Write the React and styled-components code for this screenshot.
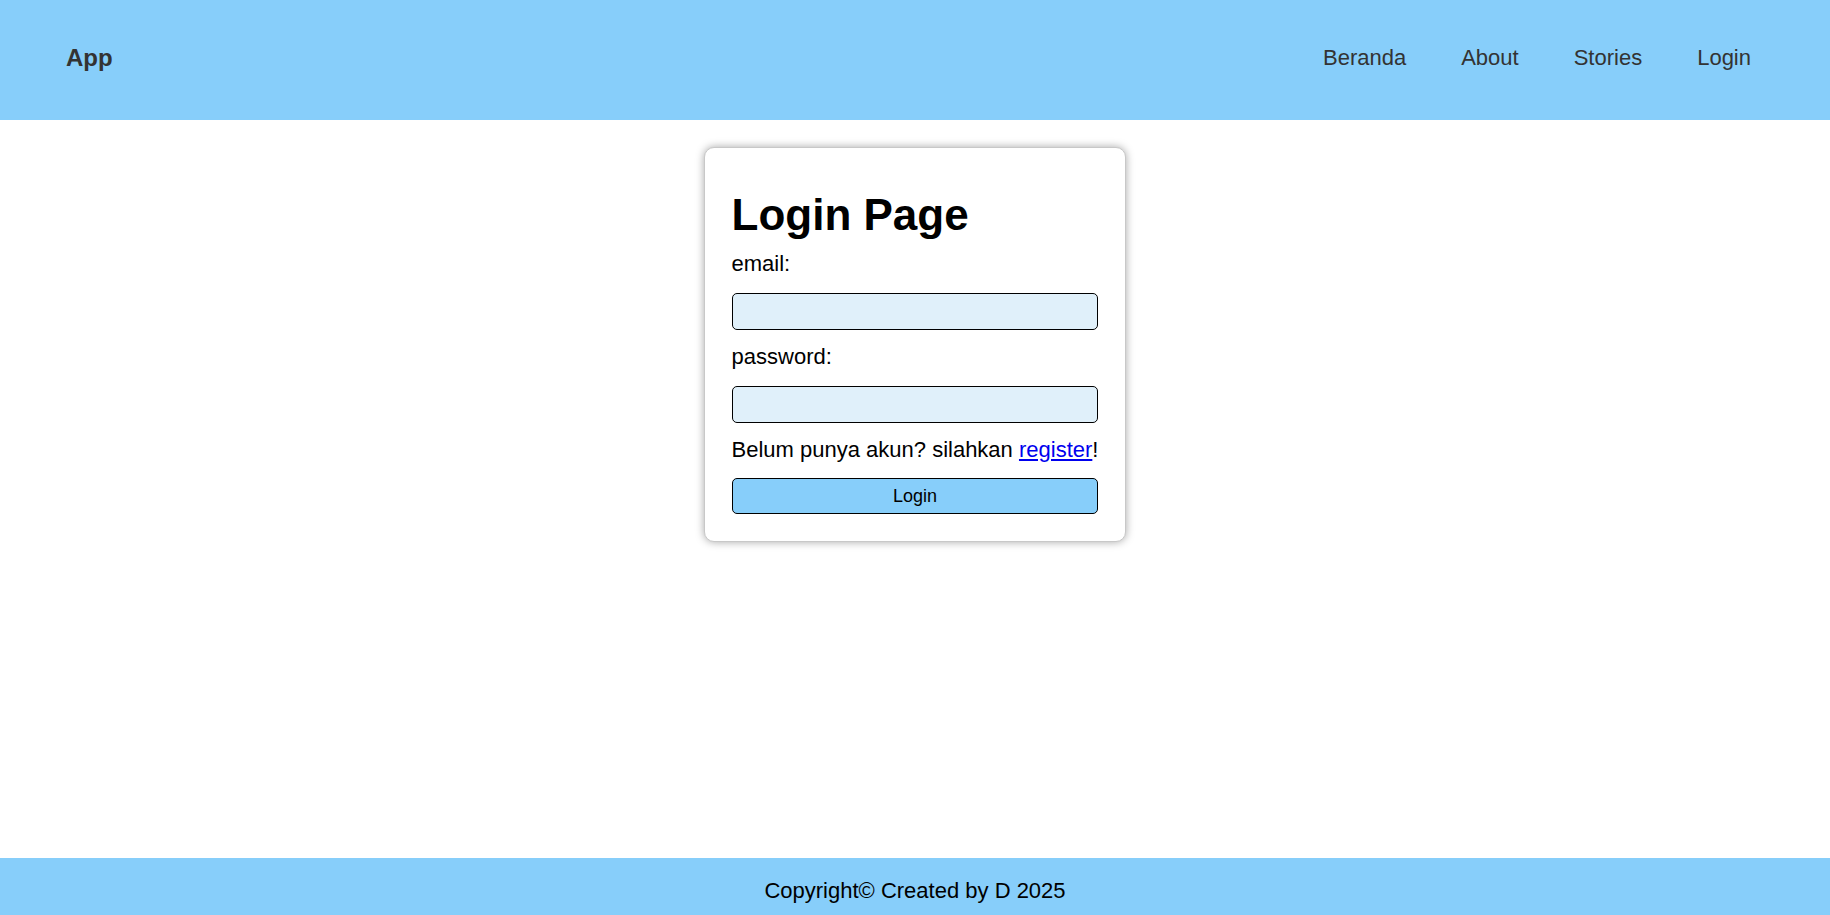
import React, { useState } from 'react'
import styled, { createGlobalStyle } from 'styled-components'

const GlobalStyle = createGlobalStyle`
  html, body {
    margin: 0;
    padding: 0;
    font-family: "Liberation Sans", Arial, sans-serif;
    background-color: #ffffff;
  }
  * {
    box-sizing: border-box;
  }
`

const Page = styled.div`
  min-height: 100vh;
  display: flex;
  flex-direction: column;
`

const Header = styled.header`
  height: 120px;
  background-color: #87cefa;
  display: flex;
  align-items: center;
  justify-content: space-between;
  padding: 0 79px 4px 66px;
`

const Brand = styled.div`
  font-size: 24px;
  font-weight: 700;
  color: #333333;
`

const Nav = styled.nav`
  display: flex;
  gap: 55px;
`

const NavLink = styled.a`
  font-size: 22px;
  color: #333333;
  text-decoration: none;
  cursor: pointer;
`

const Main = styled.main`
  flex: 1;
  display: flex;
  justify-content: center;
  align-items: flex-start;
  padding-top: 27px;
`

const Card = styled.div`
  width: fit-content;
  padding: 27px;
  border: 1px solid #c8c8c8;
  border-radius: 10px;
  box-shadow: 0 0 8px rgba(0, 0, 0, 0.35);
  background-color: #ffffff;
  font-size: 22px;
  color: #000000;
`

const Title = styled.h1`
  font-size: 44px;
  font-weight: 700;
  margin: 15px 0 0;
`

const LoginForm = styled.form`
  display: flex;
  flex-direction: column;
  gap: 14px;
  margin-top: 11px;
`

const Label = styled.label`
  display: block;
`

const Input = styled.input`
  width: 100%;
  height: 37px;
  border: 1px solid #000000;
  border-radius: 5px;
  background-color: #e0f0fa;
  font-size: 18px;
  padding: 0 8px;
  margin-top: 2px;
  :focus {
    outline: none;
  }
`

const Hint = styled.p`
  margin: 0;
  white-space: nowrap;
  a {
    color: #0000ee;
    text-decoration: underline;
  }
`

const Button = styled.button`
  width: 100%;
  height: 36px;
  border: 1px solid #000000;
  border-radius: 5px;
  background-color: #87cefa;
  font-family: "Liberation Sans", Arial, sans-serif;
  font-size: 18px;
  color: #000000;
  margin-top: 1px;
  cursor: pointer;
`

const Footer = styled.footer`
  height: 57px;
  overflow: hidden;
  background-color: #87cefa;
  text-align: center;
  font-size: 22px;
  color: #000000;
  padding-top: 20px;
`

function App(){
    const [form, setForm] = useState({email: '', password: ''});

    const onChangeForm = (event) => {
        const {name, value} = event.target;
        setForm({...form, [name]: value});
    }

    return(
        <Page>
            <GlobalStyle />
            <Header>
                <Brand>App</Brand>
                <Nav>
                    <NavLink>Beranda</NavLink>
                    <NavLink>About</NavLink>
                    <NavLink>Stories</NavLink>
                    <NavLink>Login</NavLink>
                </Nav>
            </Header>
            <Main>
                <Card>
                    <Title>Login Page</Title>
                    <LoginForm onSubmit={(e) => e.preventDefault()}>
                        <Label htmlFor="email">email:</Label>
                        <Input type="email" name="email" value={form.email} onChange={onChangeForm} />
                        <Label htmlFor="password">password:</Label>
                        <Input type="password" name="password" value={form.password} onChange={onChangeForm} />
                        <Hint>Belum punya akun? silahkan <a href="#register">register</a>!</Hint>
                        <Button>Login</Button>
                    </LoginForm>
                </Card>
            </Main>
            <Footer>Copyright© Created by D 2025</Footer>
        </Page>
    );
}

export default App;
